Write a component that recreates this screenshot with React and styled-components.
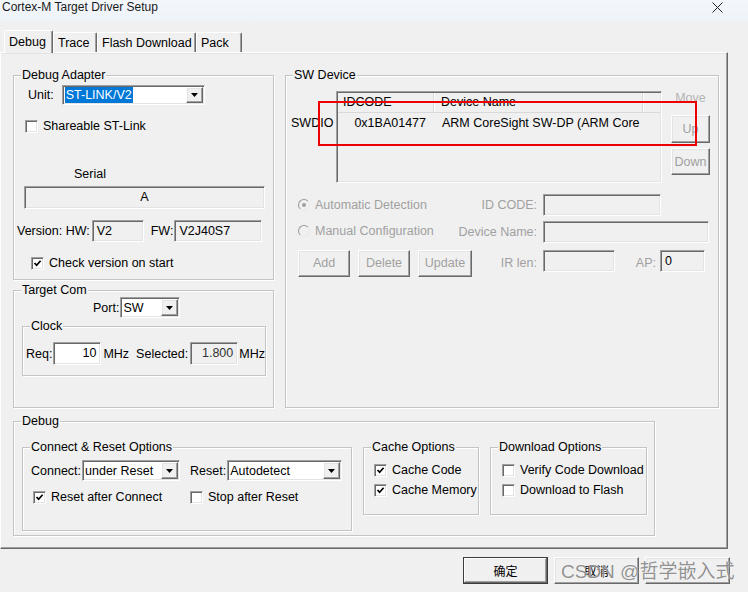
import React from 'react';
import styled, { createGlobalStyle, css } from 'styled-components';

const GlobalStyle = createGlobalStyle`
  html, body {
    margin: 0;
    padding: 0;
    background: #f0f0f0;
  }
  body {
    font-family: "Liberation Sans", "Noto Sans CJK SC", sans-serif;
    font-size: 12.5px;
    color: #000;
  }
`;

// --- 3D borders (classic Win32 look) ---

const raised = css`
  border: 1px solid;
  border-color: #fff #696969 #696969 #fff;
  box-shadow: inset -1px -1px 0 #a0a0a0, inset 1px 1px 0 #e3e3e3;
`;

const sunken = css`
  border: 1px solid;
  border-color: #a0a0a0 #fff #fff #a0a0a0;
  box-shadow: inset 1px 1px 0 #696969, inset -1px -1px 0 #e3e3e3;
`;

// --- Window chrome ---

const Window = styled.div`
  position: relative;
  width: 748px;
  height: 592px;
  overflow: hidden;
  background: #f0f0f0;
  display: flex;
  flex-direction: column;
`;

const TitleBar = styled.div`
  height: 21px;
  flex: none;
  display: flex;
  justify-content: space-between;
  align-items: flex-start;
  padding-left: 2px;
  background: linear-gradient(#f3f7fc, #eef3f9);
`;

const Title = styled.span`
  font-size: 12px;
  line-height: 15px;
  color: #1a1a1a;
`;

const CloseButton = styled.span`
  display: flex;
  margin: 2px 25px 0 0;
`;

const TabStrip = styled.div`
  position: relative;
  z-index: 2;
  display: flex;
  align-items: flex-end;
  height: 22px;
  margin-top: 9px;
  padding-left: 4px;
`;

const Tab = styled.div`
  box-sizing: border-box;
  width: ${p => p.$w}px;
  height: ${p => (p.$active ? 23 : 20)}px;
  margin-bottom: ${p => (p.$active ? -1 : 0)}px;
  padding-left: 4px;
  display: flex;
  align-items: center;
  background: #f0f0f0;
  border-top: 1px solid #fff;
  border-left: 1px solid #fff;
  border-right: 1px solid #696969;
  border-radius: 2px 2px 0 0;
  box-shadow: inset -1px 0 0 #a0a0a0;
  white-space: nowrap;
`;

const Panel = styled.div`
  box-sizing: border-box;
  width: 728px;
  height: 497px;
  flex: none;
  padding: 15px 0 0 12px;
  display: flex;
  flex-direction: column;
  border: 1px solid;
  border-color: #fff #696969 #696969 #fff;
  box-shadow: inset -1px -1px 0 #a0a0a0, inset 0 1px 0 #e3e3e3;
`;

const TopSection = styled.div`
  display: flex;
  gap: 11px;
`;

const LeftColumn = styled.div`
  display: flex;
  flex-direction: column;
  gap: 3px;
`;

// --- Group boxes ---

const Group = styled.fieldset`
  box-sizing: border-box;
  width: ${p => p.$w}px;
  height: ${p => p.$h}px;
  min-width: 0;
  margin: ${p => p.$m || '0'};
  padding: 0;
  border: 1px solid #c4c4c4;
  box-shadow: inset 1px 1px 0 #fff, 1px 1px 0 #fff;
  overflow: hidden;
`;

const Legend = styled.legend`
  padding: 0 1px;
  margin-left: 7px;
  line-height: 14px;
  background: #f0f0f0;
  white-space: nowrap;
`;

// --- Generic rows & labels ---

const Row = styled.div`
  display: flex;
  align-items: ${p => p.$align || 'center'};
  gap: ${p => p.$gap ?? 0}px;
  margin-top: ${p => p.$mt ?? 0}px;
  padding-left: ${p => p.$pl ?? 0}px;
  height: ${p => (p.$h ? `${p.$h}px` : 'auto')};
`;

const Label = styled.span`
  white-space: nowrap;
  line-height: 14px;
  color: ${p => (p.$disabled ? '#a0a0a0' : 'inherit')};
  margin: ${p => p.$m || '0'};
`;

const SideLabel = styled.div`
  width: ${p => p.$w}px;
  display: flex;
  justify-content: space-between;
  align-items: ${p => p.$align || 'center'};
  margin-right: ${p => p.$gap ?? 6}px;
  line-height: ${p => p.$lh || 14}px;
  color: #a0a0a0;
  white-space: nowrap;
`;

const EndLabel = styled.div`
  width: ${p => p.$w}px;
  text-align: right;
  margin-right: 4px;
  line-height: 27px;
  color: #a0a0a0;
`;

// --- Edit fields & combo boxes ---

const Field = styled.div`
  box-sizing: border-box;
  width: ${p => p.$w}px;
  height: ${p => p.$h || 22}px;
  flex: none;
  ${sunken};
  background: ${p => (p.$white ? '#fff' : '#f0f0f0')};
  display: flex;
  align-items: ${p => (p.$top ? 'flex-start' : 'center')};
  justify-content: ${p =>
    p.$align === 'right' ? 'flex-end' : p.$align === 'center' ? 'center' : 'flex-start'};
  padding: ${p => (p.$top ? '3px 4px 0' : '0 4px 2px')};
  color: ${p => (p.$dim ? '#333' : '#000')};
  white-space: nowrap;
`;

const Select = styled.div`
  box-sizing: border-box;
  width: ${p => p.$w}px;
  height: ${p => p.$h || 21}px;
  flex: none;
  ${sunken};
  background: #fff;
  display: flex;
  align-items: stretch;
  padding: 1px;
`;

const SelectValue = styled.div`
  flex: 1;
  display: flex;
  align-items: center;
  padding-left: 1px;
  overflow: hidden;
  white-space: nowrap;
`;

const Highlight = styled.span`
  background: #0078d7;
  color: #fff;
  line-height: 16px;
  padding: 0 1px;
`;

const DropButton = styled.div`
  box-sizing: border-box;
  width: 17px;
  flex: none;
  ${raised};
  background: #f0f0f0;
  display: flex;
  align-items: center;
  justify-content: center;
`;

const Arrow = () => (
  <svg width="7" height="4" viewBox="0 0 7 4">
    <polygon points="0,0 7,0 3.5,4" fill="#000" />
  </svg>
);

const Combo = ({ w, h, children, selected }) => (
  <Select $w={w} $h={h}>
    <SelectValue>{selected ? <Highlight>{children}</Highlight> : children}</SelectValue>
    <DropButton>
      <Arrow />
    </DropButton>
  </Select>
);

// --- Check boxes & radios ---

const CheckBox = styled.span`
  box-sizing: border-box;
  width: 13px;
  height: 13px;
  flex: none;
  ${sunken};
  background: #fff;
  display: inline-flex;
  align-items: center;
  justify-content: center;
`;

const CheckRow = styled.div`
  display: flex;
  align-items: center;
  gap: 5px;
  width: ${p => (p.$w ? `${p.$w}px` : 'auto')};
  white-space: nowrap;
  line-height: 14px;
`;

const Check = ({ checked, children, w }) => (
  <CheckRow $w={w}>
    <CheckBox>
      {checked && (
        <svg width="9" height="9" viewBox="0 0 9 9">
          <path d="M1.5 4 L3.6 6.2 L7.6 1.8" fill="none" stroke="#000" strokeWidth="1.7" />
        </svg>
      )}
    </CheckBox>
    <span>{children}</span>
  </CheckRow>
);

const RadioDot = styled.span`
  box-sizing: border-box;
  width: 12px;
  height: 12px;
  flex: none;
  border-radius: 50%;
  border: 1px solid;
  border-color: #9a9a9a #e8e8e8 #e8e8e8 #9a9a9a;
  background: #f0f0f0;
  display: inline-flex;
  align-items: center;
  justify-content: center;

  &::after {
    content: '';
    display: ${p => (p.$on ? 'block' : 'none')};
    width: 4px;
    height: 4px;
    border-radius: 50%;
    background: #a0a0a0;
  }
`;

const RadioRow = styled.span`
  display: flex;
  align-items: center;
  gap: 5px;
  margin-top: ${p => p.$mt ?? 0}px;
`;

// --- Buttons ---

const Button = styled.div`
  box-sizing: border-box;
  width: ${p => p.$w}px;
  height: ${p => p.$h || 27}px;
  flex: none;
  ${raised};
  background: #f0f0f0;
  display: flex;
  align-items: center;
  justify-content: center;
  color: ${p => (p.$disabled ? '#a0a0a0' : '#000')};
  margin-top: ${p => p.$mt ?? 0}px;

  ${p =>
    p.$default &&
    css`
      border-color: #3c3c3c;
      box-shadow: inset -1px -1px 0 #696969, inset 1px 1px 0 #fff, inset -2px -2px 0 #a0a0a0;
      font-size: 12px;
    `}
`;

// --- SW Device list view ---

const DeviceArea = styled.div`
  display: flex;
  align-items: flex-start;
  margin-top: 9px;
  padding-left: 5px;
`;

const SwdLabel = styled.span`
  width: 45px;
  margin-top: 25px;
  line-height: 14px;
`;

const ListView = styled.div`
  box-sizing: border-box;
  width: 326px;
  height: 92px;
  ${sunken};
  background: #f0f0f0;
  padding: 1px;
`;

const ListHeader = styled.div`
  display: flex;
  height: 19px;
  border-bottom: 1px solid #d9d9d9;
`;

const HeadCell = styled.div`
  box-sizing: border-box;
  width: ${p => p.$w}px;
  padding-left: ${p => p.$pl}px;
  line-height: 19px;
  border-right: 1px solid #d9d9d9;
  box-shadow: 1px 0 0 #fff;
  white-space: nowrap;
`;

const ListRow = styled.div`
  display: flex;
  margin-top: 3px;
  line-height: 14px;
`;

const Cell = styled.div`
  box-sizing: border-box;
  width: ${p => p.$w}px;
  text-align: ${p => p.$align || 'left'};
  padding: ${p => (p.$align === 'right' ? '0 8px 0 0' : '0 0 0 8px')};
  white-space: nowrap;
  overflow: hidden;
`;

const MoveColumn = styled.div`
  width: 39px;
  margin-left: 9px;
  display: flex;
  flex-direction: column;
  align-items: center;
`;

const MoveLabel = styled.span`
  line-height: 14px;
  color: #b4b4b4;
`;

const SwRows = styled.div`
  display: flex;
  flex-direction: column;
  padding-left: 12px;
`;

// --- Bottom buttons & overlays ---

const ButtonRow = styled.div`
  display: flex;
  gap: 6px;
  margin-top: 8px;
  padding-left: 463px;
  font-family: "Noto Sans CJK SC", sans-serif;
`;

const RedMark = styled.div`
  position: absolute;
  left: 318px;
  top: 101px;
  width: 379px;
  height: 45px;
  box-sizing: border-box;
  border: 2px solid #ec0000;
  pointer-events: none;
`;

const Watermark = styled.div`
  position: absolute;
  left: 561px;
  top: 561px;
  font-family: "Liberation Sans", "Noto Sans CJK SC", sans-serif;
  font-size: 19px;
  line-height: 22px;
  color: rgba(125, 125, 125, 0.85);
  text-shadow: 0 0 1px #fff;
  white-space: nowrap;
  pointer-events: none;
`;

export default function App() {
  return (
    <>
      <GlobalStyle />
      <Window>
        <TitleBar>
          <Title>Cortex-M Target Driver Setup</Title>
          <CloseButton>
            <svg width="11" height="11" viewBox="0 0 11 11">
              <path d="M0.5 0.5 L10.5 10.5 M10.5 0.5 L0.5 10.5" stroke="#222" strokeWidth="1" />
            </svg>
          </CloseButton>
        </TitleBar>

        <TabStrip>
          <Tab $active $w={49}>Debug</Tab>
          <Tab $w={44}>Trace</Tab>
          <Tab $w={99}>Flash Download</Tab>
          <Tab $w={46}>Pack</Tab>
        </TabStrip>

        <Panel>
          <TopSection>
            <LeftColumn>
              {/* Debug Adapter */}
              <Group $w={261} $h={212}>
                <Legend>Debug Adapter</Legend>
                <Row $mt={3} $pl={14} $gap={8} $h={20}>
                  <Label>Unit:</Label>
                  <Combo w={143} h={20} selected>ST-LINK/V2</Combo>
                </Row>
                <Row $mt={14} $pl={11}>
                  <Check>Shareable ST-Link</Check>
                </Row>
                <Row $mt={34} $pl={60}>
                  <Label>Serial</Label>
                </Row>
                <Row $mt={5} $pl={10}>
                  <Field $w={241} $h={23} $align="center">A</Field>
                </Row>
                <Row $mt={11} $pl={3} $h={22}>
                  <Label $m="0 2px 0 0">Version: HW:</Label>
                  <Field $w={52} $top>V2</Field>
                  <Label $m="0 1px 0 7px">FW:</Label>
                  <Field $w={88} $top>V2J40S7</Field>
                </Row>
                <Row $mt={14} $pl={17}>
                  <Check checked>Check version on start</Check>
                </Row>
              </Group>

              {/* Target Com */}
              <Group $w={261} $h={125}>
                <Legend>Target Com</Legend>
                <Row $pl={79} $gap={1} $h={21}>
                  <Label>Port:</Label>
                  <Combo w={60}>SW</Combo>
                </Row>
                <Group $w={244} $h={57} $m="1px 0 0 8px">
                  <Legend>Clock</Legend>
                  <Row $mt={9} $pl={3} $h={23}>
                    <Label $m="0 1px 0 0">Req:</Label>
                    <Field $w={48} $h={23} $white $align="right" $top>10</Field>
                    <Label $m="0 0 0 2px">MHz</Label>
                    <Label $m="0 2px 0 7px">Selected:</Label>
                    <Field $w={48} $h={23} $align="right" $dim $top>1.800</Field>
                    <Label $m="0 0 0 1px">MHz</Label>
                  </Row>
                </Group>
              </Group>
            </LeftColumn>

            {/* SW Device */}
            <Group $w={434} $h={340}>
              <Legend>SW Device</Legend>
              <DeviceArea>
                <SwdLabel>SWDIO</SwdLabel>
                <ListView>
                  <ListHeader>
                    <HeadCell $w={96} $pl={5}>IDCODE</HeadCell>
                    <HeadCell $w={209} $pl={7}>Device Name</HeadCell>
                  </ListHeader>
                  <ListRow>
                    <Cell $w={96} $align="right">0x1BA01477</Cell>
                    <Cell $w={209}>ARM CoreSight SW-DP (ARM Core</Cell>
                  </ListRow>
                </ListView>
                <MoveColumn>
                  <MoveLabel>Move</MoveLabel>
                  <Button $w={39} $h={28} $mt={10} $disabled>Up</Button>
                  <Button $w={39} $h={27} $mt={5} $disabled>Down</Button>
                </MoveColumn>
              </DeviceArea>

              <SwRows>
                <Row $mt={11} $h={22}>
                  <SideLabel $w={239}>
                    <RadioRow>
                      <RadioDot $on />
                      <span>Automatic Detection</span>
                    </RadioRow>
                    <span>ID CODE:</span>
                  </SideLabel>
                  <Field $w={118} />
                </Row>
                <Row $mt={5} $h={22}>
                  <SideLabel $w={239}>
                    <RadioRow $mt={-3}>
                      <RadioDot />
                      <span>Manual Configuration</span>
                    </RadioRow>
                    <span>Device Name:</span>
                  </SideLabel>
                  <Field $w={166} />
                </Row>
                <Row $mt={7} $align="flex-start">
                  <SideLabel $w={239} $lh={27}>
                    <Row $gap={8}>
                      <Button $w={52} $disabled>Add</Button>
                      <Button $w={52} $disabled>Delete</Button>
                      <Button $w={54} $disabled>Update</Button>
                    </Row>
                    <span>IR len:</span>
                  </SideLabel>
                  <Field $w={72} />
                  <EndLabel $w={41}>AP:</EndLabel>
                  <Field $w={45} $top>0</Field>
                </Row>
              </SwRows>
            </Group>
          </TopSection>

          {/* Debug */}
          <Group $w={642} $h={122} $m="6px 0 0 0">
            <Legend>Debug</Legend>
            <Row $mt={12} $pl={8} $gap={11} $align="flex-start">
              <Group $w={330} $h={91}>
                <Legend>Connect &amp; Reset Options</Legend>
                <Row $mt={6} $pl={8} $h={21}>
                  <Label $m="0 1px 0 0">Connect:</Label>
                  <Combo w={98}>under Reset</Combo>
                  <Label $m="0 1px 0 10px">Reset:</Label>
                  <Combo w={115}>Autodetect</Combo>
                </Row>
                <Row $mt={9} $pl={10}>
                  <Check checked w={157}>Reset after Connect</Check>
                  <Check>Stop after Reset</Check>
                </Row>
              </Group>

              <Group $w={116} $h={75}>
                <Legend>Cache Options</Legend>
                <Row $mt={9} $pl={10}>
                  <Check checked>Cache Code</Check>
                </Row>
                <Row $mt={6} $pl={10}>
                  <Check checked>Cache Memory</Check>
                </Row>
              </Group>

              <Group $w={157} $h={75}>
                <Legend>Download Options</Legend>
                <Row $mt={9} $pl={11}>
                  <Check>Verify Code Download</Check>
                </Row>
                <Row $mt={6} $pl={11}>
                  <Check>Download to Flash</Check>
                </Row>
              </Group>
            </Row>
          </Group>
        </Panel>

        <ButtonRow>
          <Button $w={85} $default>确定</Button>
          <Button $w={85}>取消</Button>
          <Button $w={85} />
        </ButtonRow>

        <RedMark />
        <Watermark>CSDN @哲学嵌入式</Watermark>
      </Window>
    </>
  );
}
